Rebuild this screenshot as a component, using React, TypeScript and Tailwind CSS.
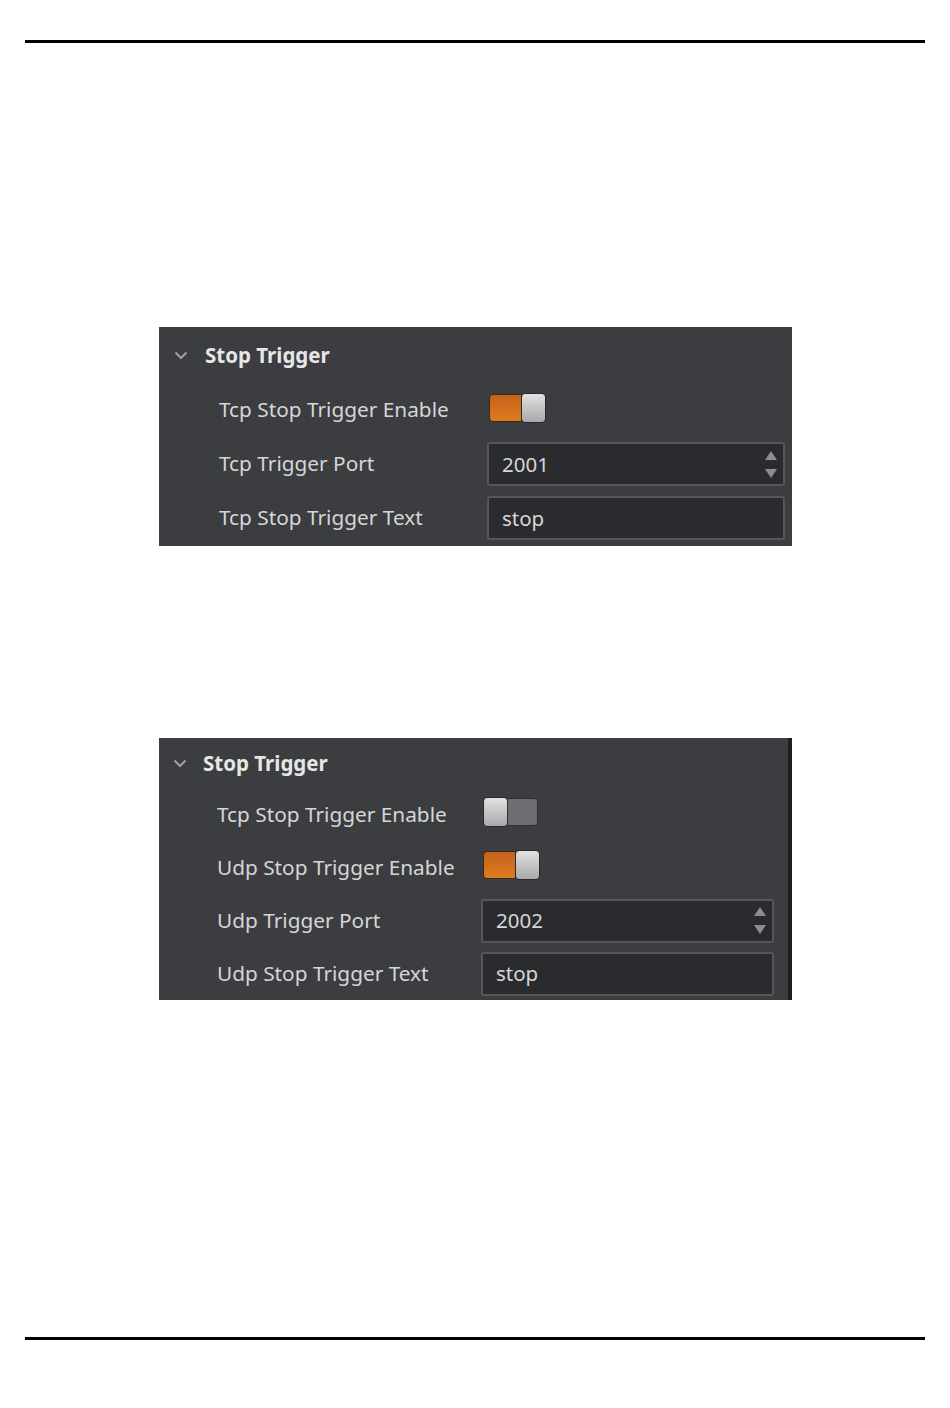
import { ReactNode } from "react";

const font = { fontFamily: '"Noto Sans", "Open Sans", sans-serif' };

function Chevron() {
  return (
    <svg width="14" height="9" viewBox="0 0 14 9" className="shrink-0">
      <path d="M1.5 1.5 L7 7 L12.5 1.5" fill="none" stroke="#a0a1a4" strokeWidth="2" />
    </svg>
  );
}

function Toggle({ on }: { on: boolean }) {
  const knob = (
    <div className="h-[30px] w-[25px] rounded-[4px] border border-[#2a2a2c] bg-gradient-to-b from-[#e2e2e2] to-[#a9a9ab]" />
  );
  return (
    <div className="flex items-center">
      {on ? (
        <>
          <div className="h-[28px] w-[33px] rounded-l-[4px] border border-[#3a2a1c] bg-gradient-to-b from-[#c4621b] to-[#df7c1f]" />
          <div className="-ml-[1px]">{knob}</div>
        </>
      ) : (
        <>
          {knob}
          <div className="-ml-[1px] h-[28px] w-[31px] rounded-r-[4px] border border-[#2e2f31] bg-[#6d6e71]" />
        </>
      )}
    </div>
  );
}

function Field({ value, spin, width }: { value: string; spin?: boolean; width: string }) {
  return (
    <div
      className={`flex h-[44px] items-center justify-between rounded-[3px] border-2 border-[#55565a] bg-[#2a2b2f] pl-[13px] pr-[6px] text-[20.5px] text-[#d6d6d6] ${width}`}
    >
      <span>{value}</span>
      {spin && (
        <div className="flex flex-col items-center gap-[9px]">
          <svg width="12" height="9" viewBox="0 0 12 9">
            <path d="M6 0 L12 9 L0 9 Z" fill="#8c8d90" />
          </svg>
          <svg width="12" height="9" viewBox="0 0 12 9">
            <path d="M0 0 L12 0 L6 9 Z" fill="#8c8d90" />
          </svg>
        </div>
      )}
    </div>
  );
}

function Row({ label, children, h, labelW }: { label: string; children: ReactNode; h: string; labelW: string }) {
  return (
    <div className={`flex items-center ${h}`}>
      <div className={`shrink-0 text-[20.8px] text-[#d6d6d6] ${labelW}`}>{label}</div>
      {children}
    </div>
  );
}

export default function App() {
  return (
    <div className="flex h-[1408px] w-[950px] flex-col bg-white" style={font}>
      <div className="mx-[25px] mt-[40px] h-[3px] bg-black" />

      {/* first panel */}
      <div className="ml-[159px] mt-[284px] h-[219px] w-[633px] bg-[#3c3d41]">
        <div className="flex h-[56px] items-center pl-[15px]">
          <Chevron />
          <span className="ml-[17px] text-[20.5px] font-bold text-[#e6e6e6]">Stop Trigger</span>
        </div>
        <div className="pl-[60px]">
          <Row label="Tcp Stop Trigger Enable" h="h-[54px]" labelW="w-[268px]">
            <div className="mb-[5px] ml-[2px]">
              <Toggle on />
            </div>
          </Row>
          <Row label="Tcp Trigger Port" h="h-[54px]" labelW="w-[268px]">
            <Field value="2001" spin width="w-[298px]" />
          </Row>
          <Row label="Tcp Stop Trigger Text" h="h-[54px]" labelW="w-[268px]">
            <Field value="stop" width="w-[298px]" />
          </Row>
        </div>
      </div>

      {/* second panel */}
      <div className="ml-[159px] mt-[192px] flex h-[262px] w-[633px] bg-[#3c3d41]">
        <div className="flex-1">
          <div className="flex h-[50px] items-center pl-[14px]">
            <Chevron />
            <span className="ml-[16px] text-[20.5px] font-bold text-[#e6e6e6]">Stop Trigger</span>
          </div>
          <div className="pl-[58px]">
            <Row label="Tcp Stop Trigger Enable" h="h-[53px]" labelW="w-[264px]">
              <div className="mb-[5px] ml-[2px]">
                <Toggle on={false} />
              </div>
            </Row>
            <Row label="Udp Stop Trigger Enable" h="h-[53px]" labelW="w-[264px]">
              <div className="mb-[5px] ml-[2px]">
                <Toggle on />
              </div>
            </Row>
            <Row label="Udp Trigger Port" h="h-[53px]" labelW="w-[264px]">
              <Field value="2002" spin width="w-[293px]" />
            </Row>
            <Row label="Udp Stop Trigger Text" h="h-[53px]" labelW="w-[264px]">
              <Field value="stop" width="w-[293px]" />
            </Row>
          </div>
        </div>
        <div className="w-[4px] bg-[#1e1f21]" />
      </div>

      <div className="mx-[25px] mt-[337px] h-[3px] bg-black" />
    </div>
  );
}
